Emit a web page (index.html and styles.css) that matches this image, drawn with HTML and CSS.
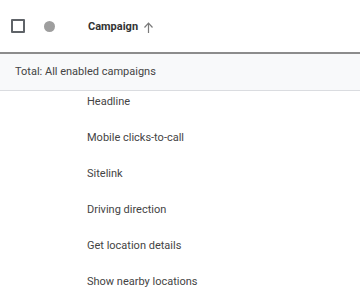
FILE: index.html
```html
<!DOCTYPE html>
<html lang="en">
<head>
    <meta charset="UTF-8">
    <title>Campaigns</title>
    <link rel="stylesheet" href="styles.css">
</head>
<body>
    <div class="table">
        <div class="head-row">
            <span class="checkbox"></span>
            <span class="status-dot"></span>
            <span class="col-title">Campaign</span>
            <svg class="sort-icon" width="11" height="11" viewBox="0 0 11 11">
                <path d="M5.5 11V1.5M1.5 5.5L5.5 1.2L9.5 5.5" fill="none" stroke="#7a7a7a" stroke-width="1.2"/>
            </svg>
        </div>
        <div class="total-row">Total: All enabled campaigns</div>
        <div class="list">
            <div class="item">Headline</div>
            <div class="item">Mobile clicks-to-call</div>
            <div class="item">Sitelink</div>
            <div class="item">Driving direction</div>
            <div class="item">Get location details</div>
            <div class="item">Show nearby locations</div>
        </div>
    </div>
</body>
</html>
```

FILE: styles.css
```css
body {
    margin: 0;
    font-family: Roboto, Arial, sans-serif;
    font-size: 11px;
    color: #444;
    background: #fff;
}
.head-row {
    display: flex;
    align-items: center;
    border-bottom: 2px solid #8c8c8c;
    box-sizing: border-box;
    height: 54px;
}
.checkbox {
    width: 10px;
    height: 10px;
    border: 2px solid #5f6368;
    border-radius: 1px;
    margin-left: 11px;
}
.status-dot {
    width: 11px;
    height: 11px;
    border-radius: 50%;
    background: #9e9e9e;
    margin-left: 19px;
}
.col-title {
    font-weight: 700;
    color: #333;
    margin-left: 33px;
}
.sort-icon {
    margin-left: 5px;
    margin-top: 2px;
}
.total-row {
    background: #f8f9fa;
    border-bottom: 1px solid #dadce0;
    height: 36px;
    line-height: 36px;
    padding-left: 15px;
}
.item {
    height: 36px;
    line-height: 22px;
    padding-left: 87px;
}
```
